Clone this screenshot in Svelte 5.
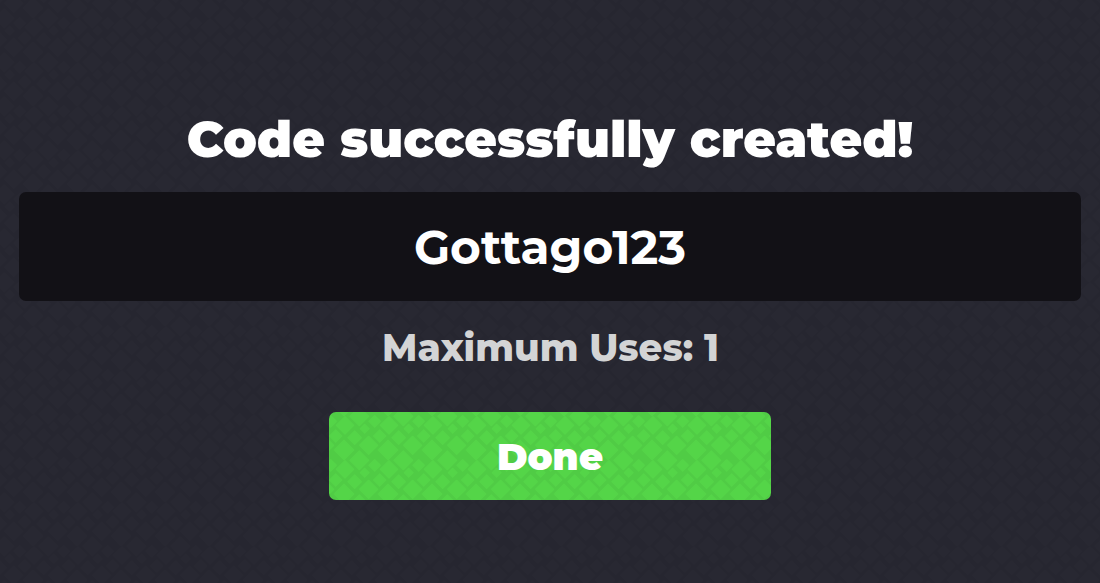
<script>
  let code = 'Gottago123'
  let maxUses = 1
</script>

<main class="page">
  <h1>Code successfully created!</h1>
  <div class="code">{code}</div>
  <p class="uses">Maximum Uses: {maxUses}</p>
  <button class="done">Done</button>
</main>

<style>
  .page {
    /* 44px tile: dark grid with uneven diamonds cut out, shared by the page and the button */
    --weave: url("data:image/svg+xml,%3Csvg xmlns='http://www.w3.org/2000/svg' width='44' height='44' viewBox='0 0 132 132'%3E%3Cdefs%3E%3Cg id='t' stroke='black' stroke-width='4' stroke-linejoin='round'%3E%3Cpath d='M33 14l26 26-26 26L7 40zM92 37l13 13-13 13-13-13zM122 11l17 17-17 17-17-17zM76-15l28 28-28 28-28-28zM62 57l20 20-20 20-20-20zM104 73l27 27-27 27-27-27zM30 85l29 29-29 29L1 114zM5 54l18 18L5 90l-18-18z'/%3E%3C/g%3E%3Cmask id='m' maskUnits='userSpaceOnUse' x='0' y='0' width='132' height='132'%3E%3Crect width='132' height='132' fill='white'/%3E%3Cuse href='%23t'/%3E%3Cuse href='%23t' x='132'/%3E%3Cuse href='%23t' x='-132'/%3E%3Cuse href='%23t' y='132'/%3E%3Cuse href='%23t' y='-132'/%3E%3C/mask%3E%3C/defs%3E%3Crect width='132' height='132' opacity='.045' mask='url(%23m)'/%3E%3C/svg%3E");
    box-sizing: border-box;
    min-height: 583px;
    padding: 110px 19px 0;
    display: flex;
    flex-direction: column;
    align-items: center;
    background: #282832 var(--weave) 22.7px 13.7px;
    font-family: Montserrat, Inter, sans-serif;
    color: #fff;
  }

  h1 {
    margin: 0 0 22px;
    font-size: 50.1px;
    line-height: 60px;
    font-weight: 900;
  }

  .code {
    box-sizing: border-box;
    width: 100%;
    height: 109px;
    padding-top: 1px;
    line-height: 109px;
    border-radius: 7px;
    background: #121116;
    text-align: center;
    font-size: 47px;
    font-weight: 700;
  }

  .uses {
    margin: 22px 0 39px;
    padding-left: 1px;
    font-size: 37.1px;
    line-height: 50px;
    font-weight: 800;
    color: #d3d4d5;
  }

  .done {
    width: 442px;
    height: 88px;
    border: 0;
    border-radius: 7px;
    background: #54d548 var(--weave) 5px 0;
    color: #fff;
    font: inherit;
    font-size: 37px;
    font-weight: 900;
  }
</style>
